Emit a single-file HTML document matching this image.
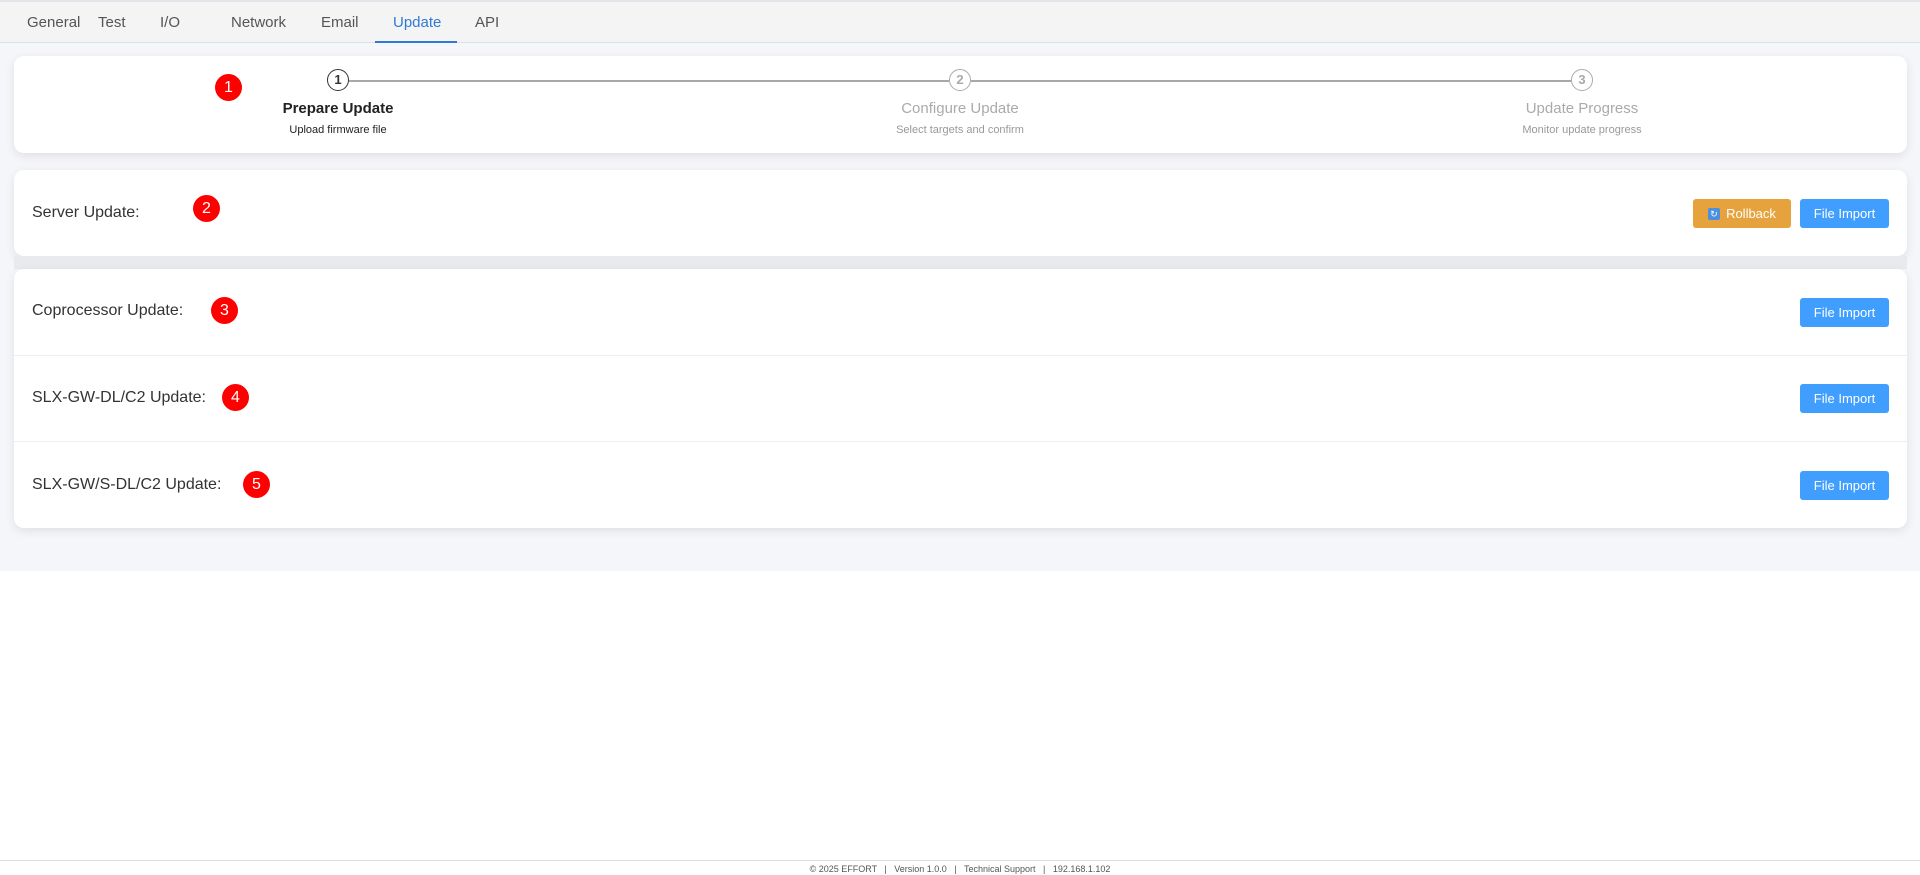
<!DOCTYPE html>
<html><head><meta charset="utf-8"><style>
*{box-sizing:border-box;margin:0;padding:0}
body{width:1920px;height:875px;background:#fff;font-family:"Liberation Sans",Arial,sans-serif;position:relative;overflow:hidden}
.tabs{position:absolute;left:0;top:0;width:1920px;height:43px;background:#f4f4f5;border-top:2px solid #e4e5ea;border-bottom:1px solid #dcdfe6}
.tab{position:absolute;top:12px;font-size:15px;color:#555}
.tab.act{color:#2f7ad6}
.ul{position:absolute;left:375px;top:39px;width:82px;height:3px;background:#2f7ad6}
.bg{position:absolute;left:0;top:43px;width:1920px;height:528px;background:#f5f6f9}
.card{position:absolute;left:14px;width:1893px;background:#fff;border-radius:10px;box-shadow:0 3px 10px rgba(0,0,0,.09)}
.circ{position:absolute;width:22px;height:22px;border-radius:50%;border:1.5px solid #aaa;background:#fff;font-size:13px;color:#aaa;text-align:center;line-height:19px;font-weight:bold}
.line{position:absolute;top:80px;height:2px;background:#a8a8ab}
.st{position:absolute;width:400px;text-align:center;font-size:15px;color:#aaa}
.ss{position:absolute;width:400px;text-align:center;font-size:11px;color:#999}
.badge{position:absolute;width:27px;height:27px;border-radius:50%;background:#f00;color:#fff;font-size:16px;text-align:center;line-height:27px}
.lbl{position:absolute;left:32px;font-size:16px;color:#333}
.btn{position:absolute;height:29px;border-radius:3px;color:#fff;font-size:13px;text-align:center;line-height:29px}
.fi{width:89px;left:1800px;background:#409eff}
.sep{position:absolute;left:14px;width:1893px;height:1px;background:#ebeef5}
.foot{position:absolute;left:0;top:860px;width:1920px;border-top:1px solid #dcdfe6;text-align:center;font-size:9px;color:#555;padding-top:3px}
</style></head><body>
<div class="tabs">
<span class="tab" style="left:27px">General</span>
<span class="tab" style="left:98px">Test</span>
<span class="tab" style="left:160px">I/O</span>
<span class="tab" style="left:231px">Network</span>
<span class="tab" style="left:321px">Email</span>
<span class="tab act" style="left:393px">Update</span>
<span class="tab" style="left:475px">API</span>
<div class="ul"></div>
</div>
<div class="bg"></div>
<div class="card" style="top:56px;height:97px"></div>
<div class="line" style="left:349px;width:600px;top:80px"></div>
<div class="line" style="left:971px;width:600px;top:80px"></div>
<div class="circ" style="left:327px;top:69px;border-color:#333;color:#333">1</div>
<div class="circ" style="left:949px;top:69px">2</div>
<div class="circ" style="left:1571px;top:69px">3</div>
<div class="st" style="left:138px;top:100px;color:#222;font-weight:bold">Prepare Update</div>
<div class="ss" style="left:138px;top:124px;color:#222">Upload firmware file</div>
<div class="st" style="left:760px;top:100px">Configure Update</div>
<div class="ss" style="left:760px;top:124px">Select targets and confirm</div>
<div class="st" style="left:1382px;top:100px">Update Progress</div>
<div class="ss" style="left:1382px;top:124px">Monitor update progress</div>
<div class="badge" style="left:215px;top:74px">1</div>

<div class="card" style="top:170px;height:86px"></div>
<div style="position:absolute;left:14px;top:256px;width:1893px;height:13px;background:#e9eaee"></div>
<div class="lbl" style="top:204px">Server Update:</div>
<div class="badge" style="left:193px;top:195px">2</div>
<div class="btn" style="left:1693px;top:199px;width:98px;background:#e6a23c"><span style="display:inline-block;width:12px;height:12px;background:#4a8fe0;border-radius:2px;vertical-align:middle;margin-right:6px;font-size:9px;line-height:12px;margin-top:-2px">↻</span>Rollback</div>
<div class="btn fi" style="top:199px">File Import</div>

<div class="card" style="top:269px;height:259px"></div>
<div class="sep" style="top:355px"></div>
<div class="sep" style="top:441px"></div>
<div class="lbl" style="top:302px">Coprocessor Update:</div>
<div class="badge" style="left:211px;top:297px">3</div>
<div class="btn fi" style="top:298px">File Import</div>
<div class="lbl" style="top:389px">SLX-GW-DL/C2 Update:</div>
<div class="badge" style="left:222px;top:384px">4</div>
<div class="btn fi" style="top:384px">File Import</div>
<div class="lbl" style="top:476px">SLX-GW/S-DL/C2 Update:</div>
<div class="badge" style="left:243px;top:471px">5</div>
<div class="btn fi" style="top:471px">File Import</div>

<div class="foot">© 2025 EFFORT &nbsp;&nbsp;|&nbsp;&nbsp; Version 1.0.0 &nbsp;&nbsp;|&nbsp;&nbsp; Technical Support &nbsp;&nbsp;|&nbsp;&nbsp; 192.168.1.102</div>
</body></html>
